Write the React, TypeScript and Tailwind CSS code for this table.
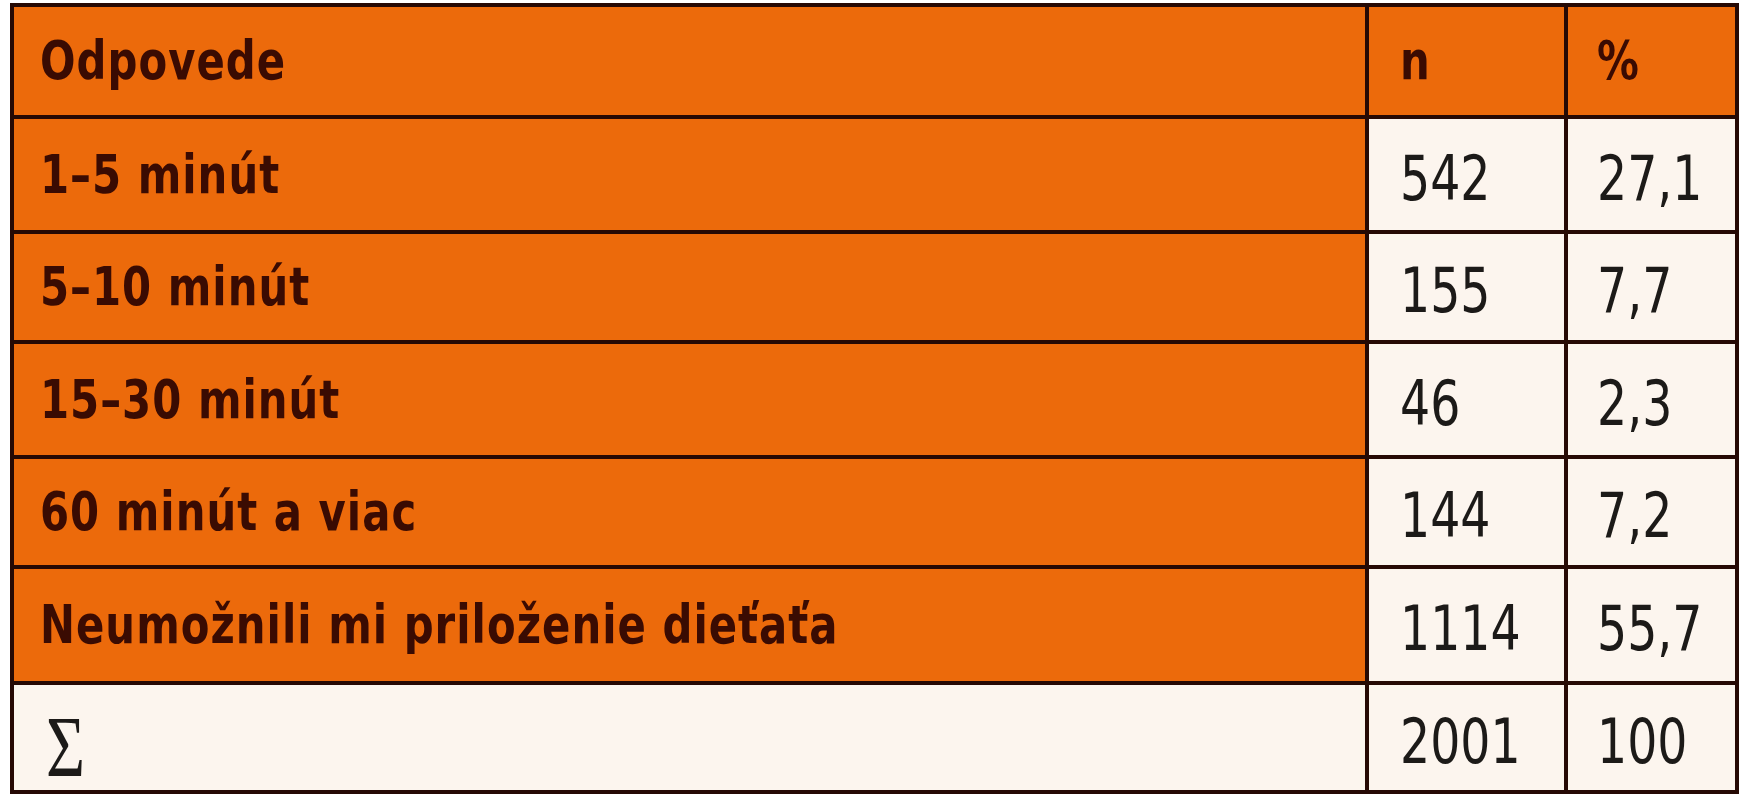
import React from "react";

const rows: [string, string, string][] = [
  ["1–5 minút", "542", "27,1"],
  ["5–10 minút", "155", "7,7"],
  ["15–30 minút", "46", "2,3"],
  ["60 minút a viac", "144", "7,2"],
  ["Neumožnili mi priloženie dieťaťa", "1114", "55,7"],
];

const labelCell = "bg-[#ec6a0b] flex items-center";
const labelText =
  "inline-block origin-left scale-x-[0.86] whitespace-nowrap tracking-[1.2px] text-[#3a0b02] font-bold text-[54px] leading-none [font-family:'Liberation_Sans_Narrow','DejaVu_Sans_Condensed',sans-serif] [font-stretch:condensed]";
const numCell = "bg-[#fcf5ee] flex items-center pt-[8px]";
const numText =
  "inline-block origin-left scale-x-[0.85] whitespace-nowrap text-[#1c1a18] text-[62px] leading-none [font-family:'Liberation_Sans_Narrow','DejaVu_Sans_Condensed',sans-serif] [font-stretch:condensed]";

export default function App() {
  return (
    <div className="w-[1748px] h-[800px] bg-white pt-[3px] pl-[10px]">
      <div className="inline-grid grid-cols-[1351px_195px_167px] grid-rows-[108px_111px_106px_111px_106px_112px_105px] gap-[4px] p-[4px] bg-[#260904]">
        <div className={labelCell + " pl-[26px]"}>
          <span className={labelText}>Odpovede</span>
        </div>
        <div className={labelCell + " pl-[31px]"}>
          <span className={labelText}>n</span>
        </div>
        <div className={labelCell + " pl-[29px]"}>
          <span className={labelText}>%</span>
        </div>
        {rows.map(([a, b, c]) => (
          <React.Fragment key={a}>
            <div className={labelCell + " pl-[26px]"}>
              <span className={labelText}>{a}</span>
            </div>
            <div className={numCell + " pl-[31px]"}>
              <span className={numText}>{b}</span>
            </div>
            <div className={numCell + " pl-[29px]"}>
              <span className={numText}>{c}</span>
            </div>
          </React.Fragment>
        ))}
        <div className="bg-[#fcf5ee] flex items-center pl-[32px] pt-[18px]">
          <span className="inline-block origin-left scale-x-[0.78] text-[#1c1a18] text-[86px] leading-none [font-family:'Liberation_Serif',serif]">
            Σ
          </span>
        </div>
        <div className={numCell + " pl-[31px]"}>
          <span className={numText}>2001</span>
        </div>
        <div className={numCell + " pl-[29px]"}>
          <span className={numText}>100</span>
        </div>
      </div>
    </div>
  );
}
